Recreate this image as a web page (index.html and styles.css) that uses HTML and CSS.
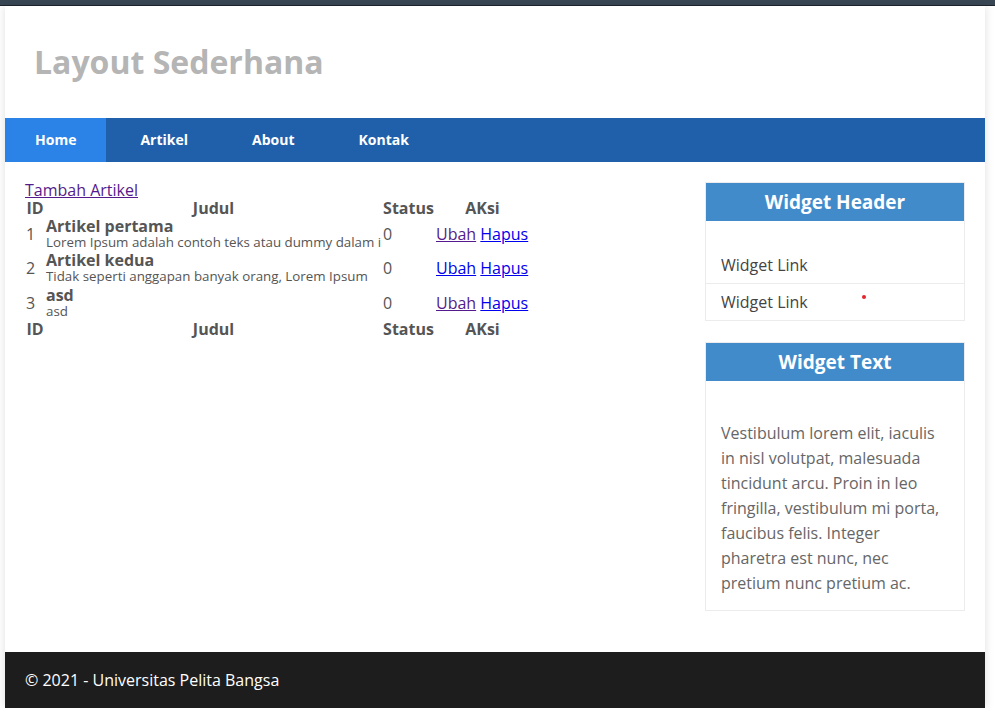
FILE: index.html
```html
<!DOCTYPE html>
<html lang="id">
<head>
<meta charset="utf-8">
<title>Layout Sederhana</title>
<link rel="stylesheet" href="styles.css">
</head>
<body>
<div class="topbar"></div>
<div class="container">
  <header class="header">
    <h1 class="site-title">Layout Sederhana</h1>
  </header>
  <nav class="nav">
    <a class="nav-item active" href="#">Home</a>
    <a class="nav-item" href="#">Artikel</a>
    <a class="nav-item" href="#">About</a>
    <a class="nav-item" href="#">Kontak</a>
  </nav>
  <div class="layout">
    <main class="main">
      <a class="add-link link-visited" href="#">Tambah Artikel</a>
      <table class="data">
        <colgroup>
          <col class="c-id"><col class="c-judul"><col class="c-status"><col class="c-aksi">
        </colgroup>
        <thead>
          <tr><th>ID</th><th>Judul</th><th>Status</th><th>AKsi</th></tr>
        </thead>
        <tbody>
          <tr>
            <td>1</td>
            <td><b class="title">Artikel pertama</b><span class="desc">Lorem Ipsum adalah contoh teks atau dummy dalam i</span></td>
            <td>0</td>
            <td><a class="link-visited" href="#">Ubah</a> <a class="link" href="#">Hapus</a></td>
          </tr>
          <tr>
            <td>2</td>
            <td><b class="title">Artikel kedua</b><span class="desc">Tidak seperti anggapan banyak orang, Lorem Ipsum </span></td>
            <td>0</td>
            <td><a class="link" href="#">Ubah</a> <a class="link" href="#">Hapus</a></td>
          </tr>
          <tr class="last-row">
            <td>3</td>
            <td><b class="title">asd</b><span class="desc">asd</span></td>
            <td>0</td>
            <td><a class="link-visited" href="#">Ubah</a> <a class="link" href="#">Hapus</a></td>
          </tr>
        </tbody>
        <tfoot>
          <tr><th>ID</th><th>Judul</th><th>Status</th><th>AKsi</th></tr>
        </tfoot>
      </table>
    </main>
    <aside class="sidebar">
      <div class="widget">
        <h3 class="widget-title">Widget Header</h3>
        <ul class="widget-list">
          <li><a href="#">Widget Link</a></li>
          <li><a href="#">Widget Link</a></li>
        </ul>
        <span class="dot"></span>
      </div>
      <div class="widget">
        <h3 class="widget-title">Widget Text</h3>
        <div class="widget-body">
          <p>Vestibulum lorem elit, iaculis in nisl volutpat, malesuada tincidunt arcu. Proin in leo fringilla, vestibulum mi porta, faucibus felis. Integer pharetra est nunc, nec pretium nunc pretium ac.</p>
        </div>
      </div>
    </aside>
  </div>
  <footer class="footer">
    <p>&copy; 2021 - Universitas Pelita Bangsa</p>
  </footer>
</div>
</body>
</html>
```

FILE: styles.css
```css
* { box-sizing: border-box; }

body {
  margin: 0;
  background: #ffffff;
  font-family: "Open Sans", "Noto Sans", sans-serif;
  color: #555555;
  font-size: 16px;
}

.topbar {
  height: 6px;
  background: #394654;
  border-bottom: 1px solid #1e252c;
}

.container {
  width: 980px;
  margin-left: 5px;
  background: #ffffff;
  box-shadow: 0 0 9px rgba(0, 0, 0, 0.13);
}

.header {
  height: 112px;
  padding: 34px 29px 0;
}

.site-title {
  margin: 0;
  font-size: 32px;
  font-weight: 700;
  color: #b5b5b5;
  line-height: normal;
}

.nav {
  display: flex;
  gap: 4px;
  height: 44px;
  background: #2060aa;
}

.nav-item {
  display: block;
  padding: 0 30px;
  line-height: 44px;
  font-size: 14px;
  font-weight: 700;
  color: #ffffff;
  text-decoration: none;
}

.nav-item.active {
  background: #2b83e8;
}

.layout {
  display: flex;
  justify-content: space-between;
  padding: 0 20px 41px;
}

.main {
  padding-top: 19px;
}

.add-link {
  display: block;
  line-height: 18px;
  font-size: 16px;
}

.link-visited { color: #551a8b; }
.link { color: #0000ee; }

.data {
  table-layout: fixed;
  border-collapse: collapse;
  width: 505px;
}

.c-id { width: 20px; }
.c-judul { width: 337px; }
.c-status { width: 53px; }
.c-aksi { width: 95px; }

.data th {
  padding: 0 1px;
  line-height: 18px;
  font-weight: 700;
  text-align: center;
  color: #555555;
}

.data td {
  padding: 0 1px 1px;
  line-height: 18px;
  vertical-align: middle;
  white-space: nowrap;
}

.data .last-row td {
  padding-top: 1px;
}

.title {
  display: block;
  line-height: 18px;
  font-weight: 700;
}

.desc {
  display: block;
  font-size: 13.33px;
  line-height: 15px;
}

.sidebar {
  width: 260px;
  margin-top: 20px;
  display: flex;
  flex-direction: column;
  gap: 21px;
}

.widget {
  position: relative;
  border: 1px solid #ececec;
}

.widget-title {
  margin: 0;
  height: 38px;
  line-height: 38px;
  background: #428bca;
  color: #ffffff;
  font-size: 19px;
  font-weight: 700;
  text-align: center;
}

.widget-list {
  list-style: none;
  margin: 0;
  padding: 26px 0 0;
}

.widget-list li {
  padding: 7px 15px;
  border-bottom: 1px solid #ececec;
}

.widget-list li:last-child {
  border-bottom: none;
}

.widget-list a {
  color: #444444;
  text-decoration: none;
}

.dot {
  position: absolute;
  left: 156px;
  top: 112px;
  width: 4px;
  height: 4px;
  border-radius: 50%;
  background: #e3262a;
}

.widget-body {
  padding: 40px 15px 14px;
}

.widget-body p {
  margin: 0;
  line-height: 25px;
  color: #666666;
}

.footer {
  height: 56px;
  background: #1d1d1d;
  padding: 17px 20px;
}

.footer p {
  margin: 0;
  color: #ffffff;
  line-height: 22px;
}
```
